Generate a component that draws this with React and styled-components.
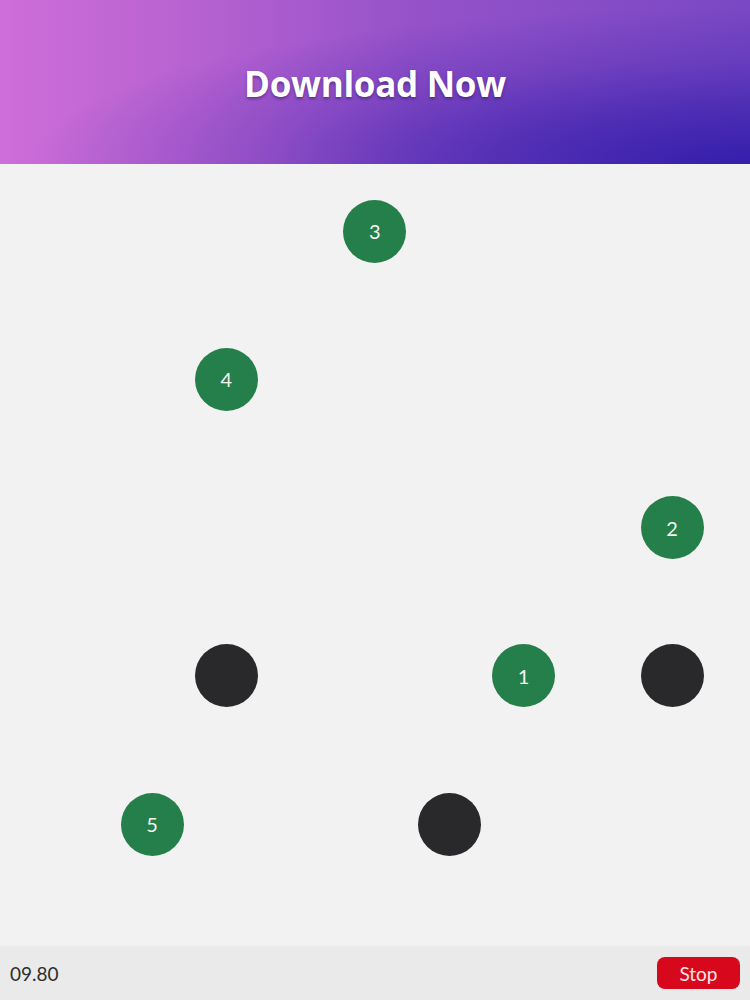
import React from "react";
import styled, { createGlobalStyle } from "styled-components";

const GlobalStyle = createGlobalStyle`
  html, body {
    margin: 0;
    padding: 0;
    background: #f2f2f2;
  }
  body {
    font-family: "Lato", "Open Sans", sans-serif;
  }
`;

const STEP_X = 74.3;
const STEP_Y = 148.3;
const SIZE = 63;

const dots = [
  { col: 5, row: 0, label: "3" },
  { col: 3, row: 1, label: "4" },
  { col: 9, row: 2, label: "2" },
  { col: 3, row: 3, dark: true },
  { col: 7, row: 3, label: "1" },
  { col: 9, row: 3, dark: true },
  { col: 2, row: 4, label: "5" },
  { col: 6, row: 4, dark: true },
];

const App = () => {
  return (
    <>
      <GlobalStyle />
      <Page>
        <Header>
          <Title>Download Now</Title>
        </Header>
        <Board>
          {dots.map((d, i) => (
            <Dot
              key={i}
              $dark={d.dark}
              style={{
                left: 3.4 + d.col * STEP_X - SIZE / 2,
                top: 67 + d.row * STEP_Y - SIZE / 2,
              }}
            >
              {d.label}
            </Dot>
          ))}
        </Board>
        <Footer>
          <Timer>09.80</Timer>
          <StopButton>Stop</StopButton>
        </Footer>
      </Page>
    </>
  );
};

const Page = styled.div`
  width: 750px;
  height: 1000px;
  display: flex;
  flex-direction: column;
  overflow: hidden;
`;

const Header = styled.header`
  height: 164px;
  flex-shrink: 0;
  display: flex;
  align-items: center;
  justify-content: center;
  background:
    radial-gradient(
      ellipse at 100% 100%,
      rgba(48, 28, 170, 0.95) 0%,
      rgba(48, 28, 170, 0.6) 25%,
      rgba(48, 28, 170, 0.25) 45%,
      rgba(48, 28, 170, 0) 68%
    ),
    linear-gradient(90deg, #cd6ed9 0%, #b862d1 25%, #9552c9 55%, #7a48c4 100%);
`;

const Title = styled.h1`
  margin: 0;
  color: #fff;
  font-family: "Open Sans", sans-serif;
  font-weight: 700;
  font-size: 35px;
  letter-spacing: -0.3px;
  text-shadow: 0 2px 3px rgba(40, 10, 80, 0.45);
  transform: translateY(1px);
`;

const Board = styled.main`
  position: relative;
  flex: 1;
  background: #f2f2f2;
`;

const Dot = styled.div`
  position: absolute;
  width: ${SIZE}px;
  height: ${SIZE}px;
  border-radius: 50%;
  background: ${(p) => (p.$dark ? "#29282b" : "#247f4a")};
  color: #f4f4f4;
  display: flex;
  align-items: center;
  justify-content: center;
  font-family: "Lato", sans-serif;
  font-weight: 400;
  font-size: 20px;
`;

const Footer = styled.footer`
  height: 54px;
  flex-shrink: 0;
  display: flex;
  align-items: center;
  justify-content: space-between;
  padding: 0 10px;
  background: #ebeaeb;
`;

const Timer = styled.span`
  font-family: "Lato", sans-serif;
  font-size: 19px;
  color: #2e2e2e;
`;

const StopButton = styled.button`
  width: 83px;
  height: 32px;
  border: none;
  border-radius: 8px;
  background: #d8081c;
  color: #ffe6e8;
  font-family: "Lato", sans-serif;
  font-size: 19px;
  padding: 0;
  cursor: pointer;
`;

export default App;
